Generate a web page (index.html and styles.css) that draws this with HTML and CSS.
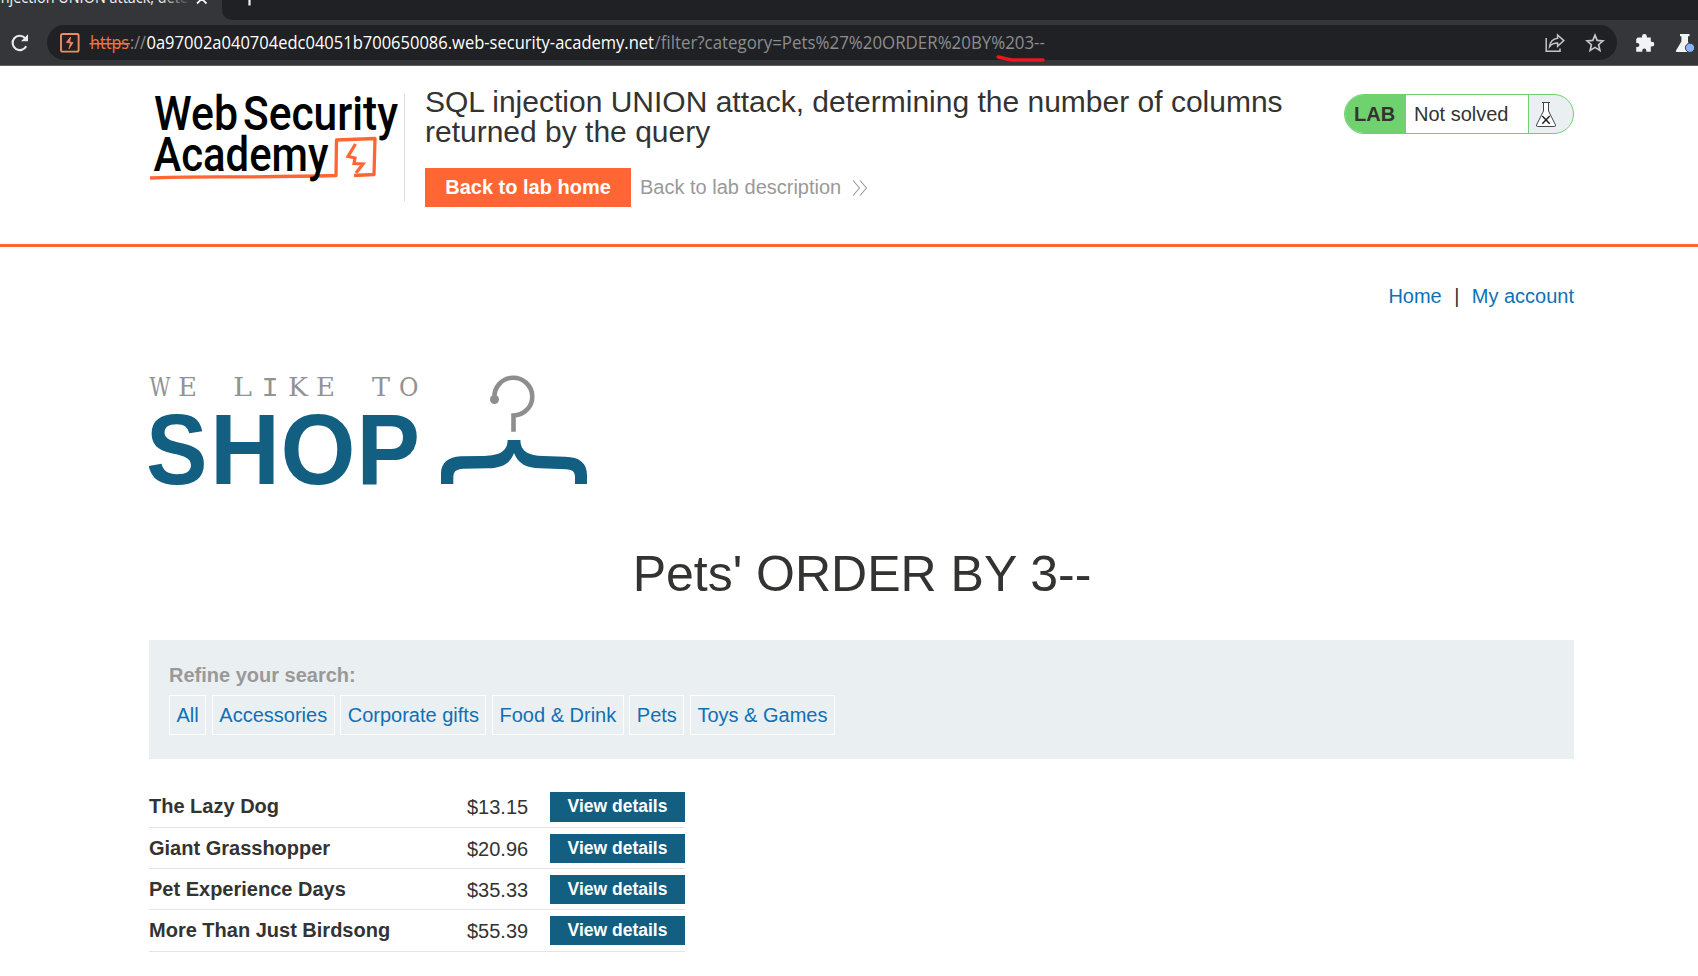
FILE: index.html
```
<!DOCTYPE html>
<html lang="en">
<head>
<meta charset="utf-8">
<title>SQL injection UNION attack, determining the number of columns</title>
<link rel="stylesheet" href="styles.css">
</head>
<body>
<div class="browser">
  <div class="tabstrip">
    <div class="tab">
      <svg class="tab-art" viewBox="0 0 222 20">
        <defs><linearGradient id="fade" gradientUnits="userSpaceOnUse" x1="160" y1="0" x2="188" y2="0"><stop offset="0" stop-color="#f1f3f4"/><stop offset="1" stop-color="#f1f3f4" stop-opacity="0.1"/></linearGradient></defs>
        <text class="tab-title" x="-3" y="3" textLength="191" lengthAdjust="spacingAndGlyphs" fill="url(#fade)">injection UNION attack, dete</text>
        <path d="M197 -6 L206.5 3.5 M206.5 -6 L197 3.5" stroke="#f1f3f4" stroke-width="1.8"/>
      </svg>
    </div>
    <div class="strip-rest"><svg viewBox="0 0 60 20" width="60" height="20"><path d="M27.5 -8V5.5M20-1.5H35" stroke="#f1f3f4" stroke-width="2.2"/></svg></div>
  </div>
  <div class="toolbar">
    <svg class="reload" viewBox="0 0 20 20"><path d="M16.2 13.2A7.2 7.2 0 1 1 15 4.9" fill="none" stroke="#e8eaed" stroke-width="2.1"/><path d="M18 1.2V8.2H11Z" fill="#e8eaed"/></svg>
    <div class="omnibox">
      <svg class="url" viewBox="47 25 1010 35">
        <rect x="61" y="34" width="17.6" height="17.6" rx="1.6" fill="none" stroke="#f28b60" stroke-width="1.9"/>
        <path d="M70.6 37 L66.4 42.4 L70.5 42.9 L69 48.8 L73 42.6 L69.6 42.2 Z" fill="#f28b60" stroke="#f28b60" stroke-width=".8"/>
        <text class="scheme" x="90" y="49" textLength="39" lengthAdjust="spacingAndGlyphs">https</text>
        <path d="M89.5 43.7H130" stroke="#f4743f" stroke-width="1.4"/>
        <text class="muted" x="130" y="49" textLength="16" lengthAdjust="spacingAndGlyphs">://</text>
        <text class="host" x="146.5" y="49" textLength="507.5" lengthAdjust="spacingAndGlyphs">0a97002a040704edc04051b700650086.web-security-academy.net</text>
        <text class="muted" x="654.5" y="49" textLength="390.5" lengthAdjust="spacingAndGlyphs">/filter?category=Pets%27%20ORDER%20BY%203--</text>
      </svg>
      <div class="omni-icons">
        <svg width="20" height="20" viewBox="0 0 20 20" fill="none" stroke="#c4c7c9" stroke-width="1.5"><path d="M1.2 5V18.2H15V15.5"/><path d="M12.6 2 L18.8 7.6 L12.6 13.2 V10 C9 10 6.5 11 4.6 13.6 C5.2 8.6 8.5 5.8 12.6 5.3 Z"/></svg>
        <svg width="20" height="20" viewBox="0 0 20 20" fill="none" stroke="#c4c7c9" stroke-width="1.7"><path d="M10 2.2 L12.2 7.4 L18 7.9 L13.600 11.700 L14.900 17.400 L10 14.400 L5.100 17.400 L6.400 11.700 L2 7.900 L7.800 7.400Z"/></svg>
      </div>
    </div>
    <div class="ext">
      <svg width="20" height="20" viewBox="0 0 20 20"><path d="M2.8 4.5H7V3.3a2.4 2.4 0 0 1 4.8 0V4.5H15.8V8.8H16.9a2.4 2.4 0 0 1 0 4.8H15.8V18.8H11.3V17.5a2 2 0 0 0-4 0V18.8H1.2V13.9H2.4a2 2 0 0 0 0-4H1.2V6Z" fill="#f1f3f4"/></svg>
      <svg width="20" height="20" viewBox="0 0 20 20"><path d="M5 1H14.5V3.2H13V9L18 17.5Q18.6 19 17 19H2Q.4 19 1 17.4L6.4 8.5V3.2H5Z" fill="#f1f3f4"/><circle cx="15" cy="14.8" r="4.6" fill="#8ab4f8" stroke="#35363a" stroke-width="1"/></svg>
    </div>
  </div>
  <svg class="marker" viewBox="0 0 56 12"><path d="M5 3 C11 3.5 13 6 20 6 L50 6" fill="none" stroke="#e8191c" stroke-width="3.4" stroke-linecap="round"/></svg>
</div>

<header class="lab-header">
  <div class="wrap head-row">
    <svg class="academy" viewBox="149 94 256 108">
      <path d="M150 178 C190 176 250 178 336 175.5 L336.5 140 L375 138.5 L374 174.5 L354 175.5" fill="none" stroke="#ff6633" stroke-width="3.3" stroke-linejoin="round"/>
      <path d="M355.5 144 L348 156.5 L355 158 L354 163.5 L363 164 L356 173" fill="none" stroke="#ff6633" stroke-width="3.2"/>
      <g class="brand">
        <text x="154" y="130" textLength="84" lengthAdjust="spacingAndGlyphs">Web</text>
        <text x="243" y="130" textLength="155" lengthAdjust="spacingAndGlyphs">Security</text>
        <text x="153.5" y="170.5" textLength="175" lengthAdjust="spacingAndGlyphs">Academy</text>
      </g>
      <path d="M404.5 94V201.5" stroke="#dcdcdc" stroke-width="1"/>
    </svg>
    <div class="title-box">
      <h2>SQL injection UNION attack, determining the number of columns returned by the query</h2>
      <div class="actions">
        <a class="home-btn">Back to lab home</a>
        <a class="desc">Back to lab description <svg width="16" height="16" viewBox="0 0 16 16"><path d="M1 .5L7.5 8L1 15.5M8 .5L14.5 8L8 15.5" fill="none" stroke="#999" stroke-width="1.1"/></svg></a>
      </div>
    </div>
    <div class="status">
      <span class="lab">LAB</span><span class="state">Not solved</span>
      <span class="flask"><svg width="22" height="27" viewBox="0 0 22 27" fill="none" stroke="#444"><path d="M7 1.5H15M8.5 1.5V10L1.5 24Q1.2 25.5 2.5 25.5H19.5Q20.8 25.5 20.5 24L13.5 10V1.5" fill="#fff" stroke-width="1"/><path d="M7.3 15L14.7 22.8M14.7 15L7.3 22.8" stroke="#222" stroke-width="1.5"/></svg></span>
    </div>
  </div>
</header>

<main class="wrap">
  <nav class="account"><a>Home</a><span>|</span><a>My account</a></nav>
  <svg class="shop" viewBox="149 370 450 125">
    <g class="like">
      <text x="149.5" y="395.7" textLength="21" lengthAdjust="spacingAndGlyphs">W</text>
      <text x="178" y="395.7" textLength="19" lengthAdjust="spacingAndGlyphs">E</text>
      <text x="233" y="395.7" textLength="19" lengthAdjust="spacingAndGlyphs">L</text>
      <text class="mono" x="261.5" y="395.7">I</text>
      <text x="288" y="395.7" textLength="20" lengthAdjust="spacingAndGlyphs">K</text>
      <text x="316" y="395.7" textLength="19" lengthAdjust="spacingAndGlyphs">E</text>
      <text x="372" y="395.7" textLength="18" lengthAdjust="spacingAndGlyphs">T</text>
      <text x="399" y="395.7" textLength="19.5" lengthAdjust="spacingAndGlyphs">O</text>
    </g>
    <g class="big">
      <text x="146" y="484.3" textLength="61.500" lengthAdjust="spacingAndGlyphs">S</text>
      <text x="210" y="484.3" textLength="70" lengthAdjust="spacingAndGlyphs">H</text>
      <text x="280.500" y="484.3" textLength="75" lengthAdjust="spacingAndGlyphs">O</text>
      <text x="356.500" y="484.3" textLength="63.500" lengthAdjust="spacingAndGlyphs">P</text>
    </g>
    <path d="M494.5 398 A18.9 18.9 0 1 1 513.5 415.5 V431.7" fill="none" stroke="#8c8e90" stroke-width="4.6"/>
    <circle cx="494.5" cy="399.5" r="4.5" fill="#8c8e90"/>
    <path transform="translate(140 360) scale(.33333)" fill="#125f82" d="M903 372V340C903 310 925 290 962 289L1025 288C1070 287 1102 280 1103 240H1141C1142 275 1165 287 1210 288L1275 290C1320 291 1341 310 1341 345V372H1305V352C1305 335 1298 330 1278 328L1200 325C1160 324 1135 312 1122 279C1110 312 1085 323 1045 325L970 326C948 327 940 335 940 352V372Z"/>
  </svg>
  <h1>Pets' ORDER BY 3--</h1>
  <section class="filters">
    <label>Refine your search:</label>
    <div class="chips"><a>All</a><a>Accessories</a><a>Corporate gifts</a><a>Food &amp; Drink</a><a>Pets</a><a>Toys &amp; Games</a></div>
  </section>
  <div class="products">
    <div class="row"><b>The Lazy Dog</b><span>$13.15</span><a>View details</a></div>
    <div class="row"><b>Giant Grasshopper</b><span>$20.96</span><a>View details</a></div>
    <div class="row"><b>Pet Experience Days</b><span>$35.33</span><a>View details</a></div>
    <div class="row"><b>More Than Just Birdsong</b><span>$55.39</span><a>View details</a></div>
  </div>
</main>
</body>
</html>
```
FILE: styles.css
```
* { box-sizing: border-box; }
body { margin: 0; width: 1698px; height: 976px; overflow: hidden; background: #fff; color: #333332; font: 20px/1.2 "Liberation Sans", Arial, sans-serif; }
svg { display: block; flex: none; }
h1, h2 { margin: 0; font-weight: 400; }

.browser { position: relative; height: 66px; background: #35363a; border-bottom: 1px solid #5f6064; }
.tabstrip { display: flex; height: 20px; }
.tab { width: 222px; overflow: hidden; }
.tab-art { width: 222px; height: 20px; }
.tab-title { font: 15.5px "Open Sans", sans-serif; }
.strip-rest { flex: 1; background: #202124; border-bottom-left-radius: 10px; }
.toolbar { display: flex; align-items: center; height: 45px; }
.reload { width: 20px; height: 20px; margin: 0 17px 0 10px; }
.omnibox { display: flex; justify-content: space-between; align-items: center; width: 1570px; height: 35px; border-radius: 18px; background: #202124; }
.url { width: 1010px; height: 35px; font: 17.5px "Open Sans", sans-serif; }
.scheme { fill: #f4743f; }
.muted { fill: #8b8d90; }
.host { fill: #fff; }
.omni-icons { display: flex; gap: 20px; padding-right: 12px; }
.ext { display: flex; gap: 20px; margin-left: 18px; }
.marker { position: absolute; left: 993px; top: 54px; width: 56px; height: 12px; }

.wrap { width: 1425px; margin-left: 149px; }
.lab-header { height: 181px; border-bottom: 3px solid #ff6633; }
.head-row { display: flex; align-items: flex-start; padding-top: 20px; }
.academy { width: 256px; height: 108px; margin-top: 8px; overflow: visible; }
.brand { font: 500 48px Roboto, sans-serif; fill: #000; }
.title-box { width: 900px; margin-left: 20px; }
.title-box h2 { padding-top: 1px; font-size: 30px; line-height: 30px; }
.actions { display: flex; align-items: flex-start; gap: 9px; margin-top: 21px; }
.home-btn { width: 206px; height: 39px; background: #ff6633; color: #fff; font-weight: 700; line-height: 39px; text-align: center; }
.desc { display: flex; align-items: center; gap: 11px; color: #999; line-height: 39px; }
.status { display: flex; width: 230px; height: 40px; margin: 8px 0 0 auto; overflow: hidden; border: 1px solid #70d26e; border-radius: 20px; line-height: 39px; background: #eaeff1; }
.lab { width: 61px; padding-left: 9px; background: #70d26e; font-weight: 700; }
.state { width: 123px; padding-left: 8px; background: #fff; border-right: 1px solid #70d26e; }
.flask { padding: 6px 0 0 6px; }

.account { display: flex; justify-content: flex-end; gap: 12.4px; margin-top: 37px; height: 24px; line-height: 24px; }
.account a, .chips a { color: #0f70b7; }
.shop { width: 450px; height: 125px; margin-top: 62px; }
.like { font: 26px "DejaVu Serif", serif; fill: #929394; }
.like .mono { font: 28.5px "Liberation Mono", monospace; }
.big { font: 700 100px "Liberation Sans", Arial, sans-serif; fill: #125f82; }
h1 { margin-top: 50px; height: 58px; padding-left: 1px; font-size: 50px; line-height: 58px; text-align: center; }
.filters { height: 119px; margin-top: 37px; padding: 23px 20px; background: #eaeff1; }
.filters label { display: block; height: 32px; line-height: 24px; color: #999; font-weight: 700; }
.chips { display: flex; gap: 5.6px; }
.chips a { height: 40px; padding: 0 6.5px; border: 1px solid #fff; line-height: 38px; }
.products { width: 536px; margin-top: 27px; }
.row { display: grid; grid-template-columns: 318px 83px 135px; align-items: start; height: 41px; padding-top: 6px; border-bottom: 1px solid #e4e4e4; line-height: 29px; }
.row:first-child, .row:last-child { height: 42px; }
.row span { line-height: 31px; }
.row a { height: 29px; background: #125f82; color: #fff; font-size: 17.5px; font-weight: 700; line-height: 28px; text-align: center; }
.row:first-child a { height: 30px; }
```
